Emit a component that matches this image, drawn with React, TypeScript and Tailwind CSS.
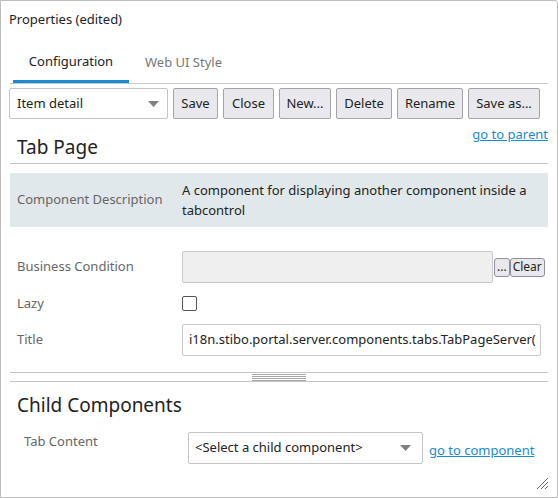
import React from 'react';

// Properties panel for a Tab Page component
const font = { fontFamily: '"Noto Sans", "Open Sans", sans-serif' };

function ToolButton({ label, width }: { label: string; width: string }) {
  return (
    <button
      className={`${width} h-[31px] shrink-0 whitespace-nowrap bg-[#e9e9ed] border border-[#a4a4a8] rounded-[2px] text-[13px] text-[#222] leading-none`}
    >
      {label}
    </button>
  );
}

function Arrow() {
  return (
    <svg width="11" height="6" viewBox="0 0 11 6">
      <path d="M0 0 L11 0 L5.5 6 Z" fill="#808080" />
    </svg>
  );
}

export default function App() {
  return (
    <div
      style={font}
      className="relative w-[558px] h-[498px] border border-[#bcbcbc] rounded-tr-[3px] bg-white text-[13px] text-[#333] flex flex-col overflow-hidden"
    >
      {/* Header */}
      <div className="px-[8px] pt-[9px] leading-[18px] text-[#222]">Properties (edited)</div>

      {/* Tabs */}
      <div className="mx-[9px] mt-[14px] flex border-b border-[#c8c8c8]">
        <div className="ml-[3px] w-[116px] h-[41px] pt-[1px] flex items-center justify-center border-b-[3px] border-[#1a8ad0] mb-[-1px] text-[#222]">
          Configuration
        </div>
        <div className="px-[16px] h-[41px] pt-[1px] flex items-center text-[#777]">Web UI Style</div>
      </div>

      {/* Toolbar */}
      <div className="mt-[4px] px-[8px] flex gap-[5px]">
        <div className="w-[159px] shrink-0 h-[31px] border border-[#c4c4c4] rounded-[2px] flex items-center justify-between pl-[7px] pr-[8px] text-[#222]">
          <span>Item detail</span>
          <Arrow />
        </div>
        <ToolButton label="Save" width="w-[45px]" />
        <ToolButton label="Close" width="w-[51px]" />
        <ToolButton label="New..." width="w-[52px]" />
        <ToolButton label="Delete" width="w-[56px]" />
        <ToolButton label="Rename" width="w-[66px]" />
        <ToolButton label="Save as..." width="w-[72px]" />
      </div>

      {/* Section: Tab Page */}
      <div className="mx-[9px] mt-[6px] flex justify-between items-start border-b border-[#c4c4c4]">
        <div className="pl-[7px] pt-[10px] pb-[4px] text-[19px] leading-[24px] text-[#222]">Tab Page</div>
        <a className="leading-[18px] text-[#1b8ad0] underline">go to parent</a>
      </div>

      <div className="mx-[9px] mt-[9px] h-[54px] bg-[#e1e8eb] flex items-center">
        <div className="w-[172px] pl-[7px] text-[#666]">Component Description</div>
        <div className="w-[355px] leading-[20px] text-[#222]">
          A component for displaying another component inside a tabcontrol
        </div>
      </div>

      {/* Form rows */}
      <div className="mt-[24px] mx-[9px] flex flex-col gap-[5px]">
        <div className="h-[32px] flex items-center">
          <div className="w-[172px] pl-[7px] text-[#666]">Business Condition</div>
          <div className="w-[311px] h-[32px] bg-[#efefef] border border-[#c8c8c8] rounded-[2px]" />
          <button className="ml-[1px] h-[19px] px-[2px] bg-[#e9e9ed] border border-[#8f8f9d] rounded-[3px] text-[12px] leading-none text-[#222]">
            ...
          </button>
          <button className="h-[19px] px-[2px] bg-[#e9e9ed] border border-[#8f8f9d] rounded-[3px] text-[12px] leading-none text-[#222]">
            Clear
          </button>
        </div>
        <div className="h-[31px] flex items-center">
          <div className="w-[172px] pl-[7px] text-[#666]">Lazy</div>
          <div className="w-[15px] h-[15px] border-[1.5px] border-[#555] rounded-[2px]" />
        </div>
        <div className="h-[32px] flex items-center">
          <div className="w-[172px] pl-[7px] text-[#666]">Title</div>
          <div className="w-[359px] h-[32px] border border-[#c8c8c8] rounded-[2px] flex items-center pl-[6px] overflow-hidden whitespace-nowrap text-[#222]">
            i18n.stibo.portal.server.components.tabs.TabPageServer(
          </div>
        </div>
      </div>

      {/* Splitter */}
      <div className="mx-[9px] mt-[16px] h-[10px] border-t border-b border-[#c4c4c4] flex justify-center">
        <div className="w-[54px] pt-[1px] flex flex-col gap-[1px]">
          <div className="h-px bg-[#a8a8a8]" />
          <div className="h-px bg-[#a8a8a8]" />
          <div className="h-px bg-[#a8a8a8]" />
          <div className="h-px bg-[#a8a8a8]" />
        </div>
      </div>

      {/* Section: Child Components */}
      <div className="mx-[9px] pl-[7px] pt-[11px] text-[19px] leading-[24px] text-[#222]">Child Components</div>

      <div className="mx-[9px] mt-[15px] flex items-start">
        <div className="w-[178px] pl-[14px] leading-[18px] text-[#666]">Tab Content</div>
        <div className="w-[235px] h-[32px] border border-[#c4c4c4] rounded-[2px] flex items-center justify-between pl-[6px] pr-[11px] text-[#222]">
          <span>&lt;Select a child component&gt;</span>
          <Arrow />
        </div>
        <a className="ml-[6px] mt-[9px] leading-[18px] text-[#1b8ad0] underline">go to component</a>
      </div>

      {/* Resize grip */}
      <svg className="absolute right-[9px] bottom-[8px]" width="12" height="12" viewBox="0 0 12 12">
        <path d="M12 1 L1 12 M12 5 L5 12 M12 9 L9 12" stroke="#666" strokeWidth="1" />
      </svg>
    </div>
  );
}
